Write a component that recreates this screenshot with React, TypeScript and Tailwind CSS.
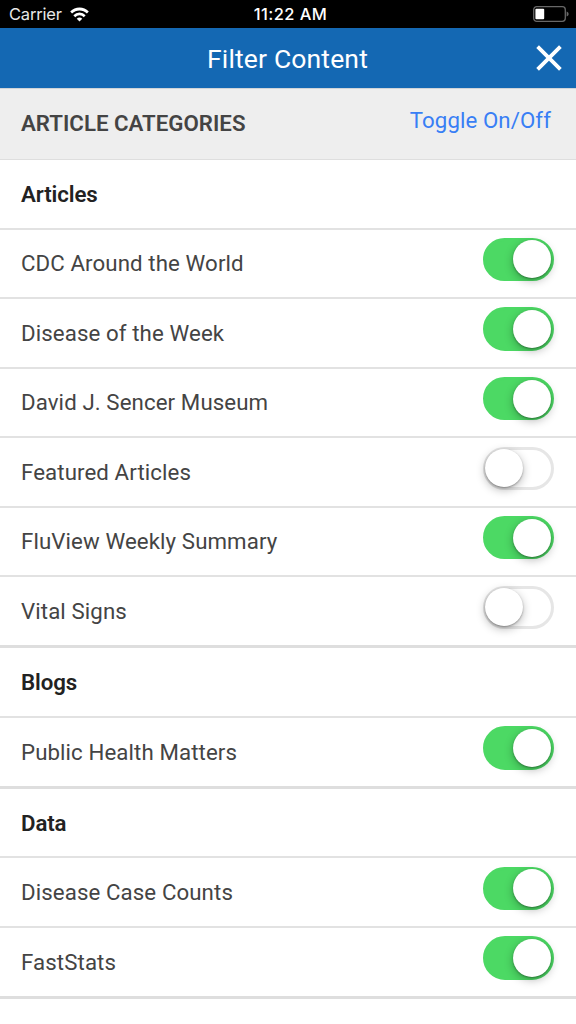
import { useState } from 'react';
import clsx from 'clsx';

type Item = { name: string; enabled: boolean };
type Category = { title: string; items: Item[] };

// ==============================
// 1. DATA
// ==============================

const initialCategories: Category[] = [
  {
    title: 'Articles',
    items: [
      { name: 'CDC Around the World', enabled: true },
      { name: 'Disease of the Week', enabled: true },
      { name: 'David J. Sencer Museum', enabled: true },
      { name: 'Featured Articles', enabled: false },
      { name: 'FluView Weekly Summary', enabled: true },
      { name: 'Vital Signs', enabled: false },
    ],
  },
  {
    title: 'Blogs',
    items: [{ name: 'Public Health Matters', enabled: true }],
  },
  {
    title: 'Data',
    items: [
      { name: 'Disease Case Counts', enabled: true },
      { name: 'FastStats', enabled: true },
    ],
  },
];

// ==============================
// 2. COMPONENTS
// ==============================

function StatusBar() {
  return (
    <div className="grid h-7 grid-cols-3 items-center bg-black pt-px pr-[7px] pl-[9px] font-['Inter',sans-serif] text-[16.5px] text-[#e8e8e8]">
      <div className="flex items-center gap-[8px]">
        <span className="tracking-[-0.2px]">Carrier</span>
        <svg className="mb-px" width="19" height="15" viewBox="0 0 20 15" preserveAspectRatio="none" fill="none" stroke="#fff" strokeWidth="2.8">
          <path d="M1.2 5.6a12.5 12.5 0 0 1 17.6 0" />
          <path d="M4.5 9.2a7.8 7.8 0 0 1 11 0" />
          <path d="M10 14.6 7.1 11.8a4.2 4.2 0 0 1 5.8 0Z" fill="#fff" stroke="none" />
        </svg>
      </div>
      <span className="pl-[3px] text-center font-medium tracking-[0.4px] whitespace-nowrap text-white">11:22 AM</span>
      <svg className="mb-px justify-self-end" width="36" height="16" viewBox="0 0 36 16">
        <rect x="0.7" y="0.7" width="31.6" height="14.6" rx="3" fill="none" stroke="#686868" strokeWidth="1.3" />
        <rect x="2.4" y="2.8" width="8.8" height="10.4" rx="1" fill="#fff" />
        <path d="M33.6 5.4v5.2c1.4-.6 2-1.5 2-2.6s-.6-2-2-2.6Z" fill="#686868" />
      </svg>
    </div>
  );
}

function Toggle({ on, label, onClick }: { on: boolean; label: string; onClick: () => void }) {
  return (
    <button
      role="switch"
      aria-checked={on}
      aria-label={label}
      onClick={onClick}
      className={clsx(
        'mb-[9px] flex h-[43.13px] w-[71px] shrink-0 cursor-pointer items-center rounded-full border-[3px]',
        on ? 'justify-end border-[#4cd964] bg-[#4cd964]' : 'justify-start border-[#e6e6e6] bg-white'
      )}
    >
      <span
        className={clsx(
          'size-[38px] shrink-0 rounded-full bg-white shadow-[0_3px_10px_rgba(0,0,0,0.28),0_1px_2px_rgba(0,0,0,0.3)]',
          !on && '-ml-px'
        )}
      />
    </button>
  );
}

export default function App() {
  const [categories, setCategories] = useState(initialCategories);

  const toggleItem = (name: string) =>
    setCategories((prev) =>
      prev.map((c) => ({
        ...c,
        items: c.items.map((i) => (i.name === name ? { ...i, enabled: !i.enabled } : i)),
      }))
    );

  // Switch everything off only when everything is on
  const toggleAll = () =>
    setCategories((prev) => {
      const allOn = prev.every((c) => c.items.every((i) => i.enabled));
      return prev.map((c) => ({ ...c, items: c.items.map((i) => ({ ...i, enabled: !allOn })) }));
    });

  return (
    <div className="h-screen w-full overflow-hidden bg-white font-['Roboto',sans-serif] text-[22.26px] text-[#444]">
      <StatusBar />

      <header className="grid h-[60px] grid-cols-[1fr_auto_1fr] items-center bg-[#1468b3] pr-[14px] pl-[13px] text-white">
        <h1 className="col-start-2 pt-0.5 text-[26.5px] tracking-[0.15px]">Filter Content</h1>
        <button aria-label="Close" className="cursor-pointer justify-self-end">
          <svg width="26" height="26" viewBox="0 0 26 26" stroke="#fff" strokeWidth="3.8">
            <path d="M1.6 1.6l22.8 22.8M24.4 1.6L1.6 24.4" />
          </svg>
        </button>
      </header>

      <div className="flex h-[72px] items-center justify-between border-t border-b border-t-[#d0d4d8] border-b-[#dedede] bg-[#eee] pr-[25px] pl-[21px]">
        <h2 className="font-semibold">ARTICLE CATEGORIES</h2>
        <button className="mb-[7px] cursor-pointer tracking-[0.08px] text-[#387ef5]" onClick={toggleAll}>
          Toggle On/Off
        </button>
      </div>

      {categories.map((category) => (
        <section key={category.title} className="border-b border-[#dedede]">
          <h3 className="flex h-[69.565px] items-center border-b-2 border-[#e2e2e2] pt-[1.4px] pl-[21px] font-semibold tracking-[-0.1px] text-[#222]">
            {category.title}
          </h3>
          {category.items.map((item) => (
            <div
              key={item.name}
              className="flex h-[69.565px] items-center justify-between border-b-2 border-[#e2e2e2] pt-[1.2px] pr-[22px] pl-[21px] last:h-[69.956px] last:border-[#dedede]"
            >
              <span className="tracking-[0.1px]">{item.name}</span>
              <Toggle on={item.enabled} label={item.name} onClick={() => toggleItem(item.name)} />
            </div>
          ))}
        </section>
      ))}
    </div>
  );
}
